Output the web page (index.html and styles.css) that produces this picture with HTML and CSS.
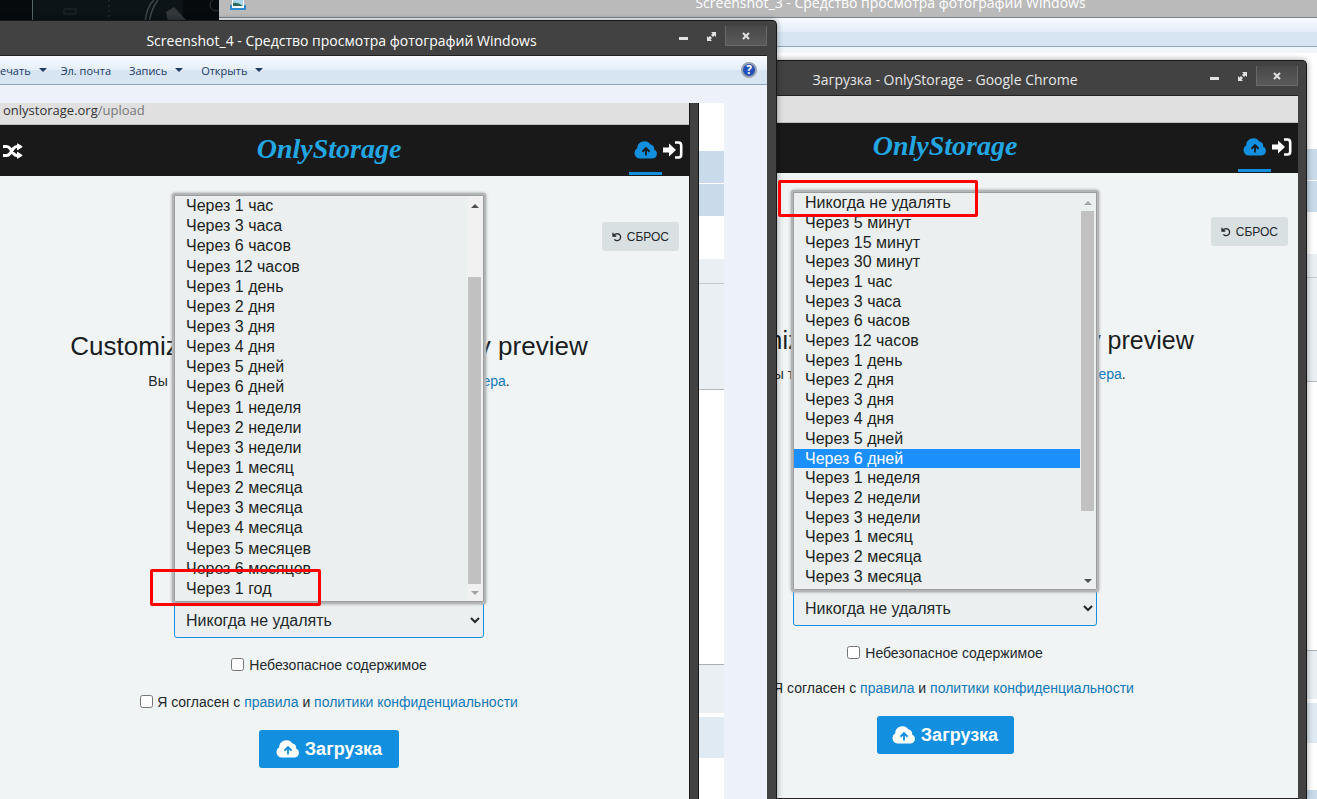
FILE: index.html
```html
<!DOCTYPE html>
<html lang="ru">
<head>
<meta charset="utf-8">
<title>OnlyStorage</title>
<link rel="stylesheet" href="styles.css">
</head>
<body>
<svg class="defs" aria-hidden="true">
  <symbol id="i-cloud" viewBox="0 0 24 18"><path fill="currentColor" fill-rule="evenodd" d="M6 17.500A5.500 5.500 0 0 1 3.200 7.300 7.200 7.200 0 0 1 16.500 3.600a3.800 3.800 0 0 1 3.500 4.900A4.700 4.700 0 0 1 18.800 17.500ZM12 5.800 7.800 10.100 9.100 11.400 11.100 9.400V14.500H12.900V9.400L14.900 11.400 16.200 10.100Z"/></symbol>
  <symbol id="i-login" viewBox="0 0 20 18"><path fill="currentColor" d="M0 6.500H6V2.500L13 9 6 15.500V11.500H0Z"/><path fill="none" stroke="currentColor" stroke-width="2.600" d="M12 1.500H15.500Q18.200 1.500 18.200 4.500V13.500Q18.200 16.500 15.500 16.500H12"/></symbol>
  <symbol id="i-shuffle" viewBox="0 0 20 16"><path fill="none" stroke="currentColor" stroke-width="3" d="M0 3.500H3.500Q5.500 3.500 7 5.500L10.500 10.500Q12 12.500 14 12.500H16M0 12.500H3.500Q5.500 12.500 7 10.500L10.500 5.500Q12 3.500 14 3.500H16"/><path fill="currentColor" stroke="currentColor" stroke-width="1" stroke-linejoin="round" d="M14.500.800 19.200 3.700 14.500 6.800ZM14.500 9.300 19.200 12.400 14.500 15.300Z"/></symbol>
  <symbol id="i-undo" viewBox="0 0 10 10"><path fill="none" stroke="currentColor" stroke-width="1.300" d="M1 .800V4H4.300M1.400 3.600Q3 1.700 5.300 1.700A3.500 3.500 0 1 1 2.400 7.400"/></symbol>
  <symbol id="i-max" viewBox="0 0 9 9"><path fill="currentColor" d="M4 0H9V5L7.500 3.500 6 5 4 3 5.500 1.500ZM0 4 1.500 5.500 3 4 5 6 3.500 7.500 5 9H0Z"/></symbol>
  <symbol id="i-close" viewBox="0 0 8 8"><path stroke="currentColor" stroke-width="2" d="M1 1 7 7M7 1 1 7"/></symbol>
</svg>

<main class="desktop">
  <svg class="wallpaper" viewBox="0 0 219 22" aria-hidden="true">
    <rect width="219" height="22" fill="#070a0c"/><rect x="33" width="150" height="22" fill="#0c1418"/>
    <path d="M32.500 0V22" stroke="#56646b"/><path d="M145 22Q147 6 154 0M149 22Q152 7 158 0" stroke="#3c484e" fill="none" stroke-width="1.500"/>
    <path d="M166 12 174 7 188 22H168Z" fill="#33373a"/><path d="M64 9H76V14H64Z" fill="none" stroke="#1e2a30"/><path d="M109 0V18" stroke="#25333a" stroke-dasharray="2 3"/>
    <circle cx="216" cy="5" r="6" fill="none" stroke="#30363a"/>
  </svg>

  <section class="window back-window" aria-label="Screenshot_3">
    <header class="back-title">
      <svg class="photo-icon" viewBox="0 0 16 10" aria-hidden="true"><path fill="#2e8bd0" d="M0 5H3V7H13V5H16V10H0Z"/><path fill="#fff" d="M2 0H14V8H2Z"/><path fill="#a9d5ee" d="M3 0H13V6H3Z"/><path fill="#2b6a57" d="M3 3Q8 2 13 6H3Z"/></svg>
      <span>Screenshot_3 - Средство просмотра фотографий Windows</span>
    </header>
    <div class="back-toolbar"></div>
    <div class="stripes">
      <i class="s-white s1"></i><i class="s-blue s2"></i><i class="s-blue s3"></i><i class="s-white s4"></i><i class="s-gray s5"></i><i class="s-gray s6"></i><i class="s-white s7"></i><i class="s-gray s8"></i><i class="s-pale s9"></i><i class="s-white s10"></i><i class="s-blue s11"></i>
    </div>
  </section>

  <section class="window chrome-window" aria-label="Загрузка">
    <header class="title-bar">
      <h2 class="title">Загрузка - OnlyStorage - Google Chrome</h2>
      <div class="controls">
        <button class="ctl" aria-label="Свернуть"><span class="dash"></span></button>
        <button class="ctl" aria-label="Развернуть"><svg><use href="#i-max"/></svg></button>
        <button class="ctl close" aria-label="Закрыть"><svg><use href="#i-close"/></svg></button>
      </div>
    </header>
    <div class="site compact">
      <div class="address"></div>
      <nav class="site-nav">
        <span></span>
        <a class="logo" href="#">OnlyStorage</a>
        <div class="nav-links">
          <a class="upload-tab" href="#" aria-label="Загрузка"><svg><use href="#i-cloud"/></svg></a>
          <a class="login" href="#" aria-label="Войти"><svg><use href="#i-login"/></svg></a>
        </div>
      </nav>
      <form class="page">
        <div class="actions"><button type="button" class="reset"><svg><use href="#i-undo"/></svg>СБРОС</button></div>
        <h1 class="heading">Customize upload by clicking on any preview</h1>
        <p class="hint">Вы также можете добавить фото с <a href="#">вашего компьютера</a>.</p>
        <div class="expiry">
          <select class="expiry-select" aria-label="Автоудаление"><option>Никогда не удалять</option></select>
          <div class="popup">
            <ul class="options" role="listbox" aria-label="Срок хранения">
              <li role="option">Никогда не удалять</li><li role="option">Через 5 минут</li><li role="option">Через 15 минут</li><li role="option">Через 30 минут</li><li role="option">Через 1 час</li><li role="option">Через 3 часа</li><li role="option">Через 6 часов</li><li role="option">Через 12 часов</li><li role="option">Через 1 день</li><li role="option">Через 2 дня</li><li role="option">Через 3 дня</li><li role="option">Через 4 дня</li><li role="option">Через 5 дней</li><li role="option" class="active" aria-selected="true">Через 6 дней</li><li role="option">Через 1 неделя</li><li role="option">Через 2 недели</li><li role="option">Через 3 недели</li><li role="option">Через 1 месяц</li><li role="option">Через 2 месяца</li><li role="option">Через 3 месяца</li>
            </ul>
            <div class="scroll"><span class="up off"></span><span class="track"><span class="thumb"></span></span><span class="down"></span></div>
          </div>
        </div>
        <label class="check nsfw"><input type="checkbox">Небезопасное содержимое</label>
        <label class="check agree"><input type="checkbox"><span>Я согласен с <a href="#">правила</a> и <a href="#">политики конфиденциальности</a></span></label>
        <button type="button" class="submit"><svg><use href="#i-cloud"/></svg>Загрузка</button>
      </form>
    </div>
  </section>

  <section class="window viewer-window" aria-label="Screenshot_4">
    <header class="title-bar">
      <h2 class="title">Screenshot_4 - Средство просмотра фотографий Windows</h2>
      <div class="controls">
        <button class="ctl" aria-label="Свернуть"><span class="dash"></span></button>
        <button class="ctl" aria-label="Развернуть"><svg><use href="#i-max"/></svg></button>
        <button class="ctl close" aria-label="Закрыть"><svg><use href="#i-close"/></svg></button>
      </div>
    </header>
    <div class="viewer">
      <div class="toolbar">
        <button class="tool">ечать<span class="caret"></span></button>
        <button class="tool">Эл. почта</button>
        <button class="tool">Запись<span class="caret"></span></button>
        <button class="tool">Открыть<span class="caret"></span></button>
        <button class="help" aria-label="Справка">?</button>
      </div>
      <div class="photo">
        <div class="site">
          <div class="address">onlystorage.org<span>/upload</span></div>
          <nav class="site-nav">
            <a class="shuffle" href="#" aria-label="Случайное"><svg><use href="#i-shuffle"/></svg></a>
            <a class="logo" href="#">OnlyStorage</a>
            <div class="nav-links">
              <a class="upload-tab" href="#" aria-label="Загрузка"><svg><use href="#i-cloud"/></svg></a>
              <a class="login" href="#" aria-label="Войти"><svg><use href="#i-login"/></svg></a>
            </div>
          </nav>
          <form class="page">
            <div class="actions"><button type="button" class="reset"><svg><use href="#i-undo"/></svg>СБРОС</button></div>
            <h1 class="heading">Customize upload by clicking on any preview</h1>
            <p class="hint">Вы также можете добавить фото с <a href="#">вашего компьютера</a>.</p>
            <div class="expiry">
              <select class="expiry-select" aria-label="Автоудаление"><option>Никогда не удалять</option></select>
              <div class="popup">
                <ul class="options" role="listbox" aria-label="Срок хранения">
                  <li role="option">Через 1 час</li><li role="option">Через 3 часа</li><li role="option">Через 6 часов</li><li role="option">Через 12 часов</li><li role="option">Через 1 день</li><li role="option">Через 2 дня</li><li role="option">Через 3 дня</li><li role="option">Через 4 дня</li><li role="option">Через 5 дней</li><li role="option">Через 6 дней</li><li role="option">Через 1 неделя</li><li role="option">Через 2 недели</li><li role="option">Через 3 недели</li><li role="option">Через 1 месяц</li><li role="option">Через 2 месяца</li><li role="option">Через 3 месяца</li><li role="option">Через 4 месяца</li><li role="option">Через 5 месяцев</li><li role="option">Через 6 месяцев</li><li role="option">Через 1 год</li>
                </ul>
                <div class="scroll at-end"><span class="up"></span><span class="track"><span class="thumb"></span></span><span class="down off"></span></div>
              </div>
            </div>
            <label class="check nsfw"><input type="checkbox">Небезопасное содержимое</label>
            <label class="check agree"><input type="checkbox"><span>Я согласен с <a href="#">правила</a> и <a href="#">политики конфиденциальности</a></span></label>
            <button type="button" class="submit"><svg><use href="#i-cloud"/></svg>Загрузка</button>
          </form>
        </div>
        <div class="inner-frame"></div>
        <div class="stripes inner">
          <i class="s-white s1"></i><i class="s-blue s2"></i><i class="s-blue s3"></i><i class="s-white s4"></i><i class="s-gray s5"></i><i class="s-gray s6"></i><i class="s-white s7"></i><i class="s-gray s8"></i><i class="s-pale s9"></i><i class="s-white s10"></i>
        </div>
      </div>
    </div>
  </section>

  <div class="mark mark-year"></div>
  <div class="mark mark-never"></div>
</main>
</body>
</html>
```
FILE: styles.css
```css
* { box-sizing: border-box; }
body { margin: 0; font-family: "Liberation Sans", Arial, sans-serif; font-size: 14px; color: #23282b; }
button, select, input { font: inherit; margin: 0; }
button { border: 0; padding: 0; background: none; color: inherit; }
a { color: #1378b8; text-decoration: none; }
.defs { position: absolute; width: 0; height: 0; }

.desktop { position: relative; height: 100vh; overflow: hidden; background: #070a0c; }
.wallpaper { display: block; width: 219px; height: 22px; }
.window { position: absolute; display: flex; flex-direction: column; }
.back-window { left: 219px; top: 0; right: 0; bottom: 0; background: #fff; }
.chrome-window { left: 583px; top: 60px; right: 10px; bottom: 0; }
.viewer-window { left: 0; top: 20px; width: 59%; bottom: 0; }

/* Window behind */
.back-title { height: 18px; flex: none; overflow: hidden; display: flex; justify-content: center; align-items: flex-start; background: #bababa; border-bottom: 1px solid #7b858d; color: #fff; font-family: "Open Sans", sans-serif; font-size: 14px; line-height: 20px; }
.back-title span { flex: 1; text-align: center; margin: -7px 0 0 245px; }
.photo-icon { position: absolute; left: 11px; top: 0; width: 16px; height: 10px; }
.back-toolbar { height: 35px; flex: none; background: linear-gradient(#f8fbff 0, #e4eef9 14px, #d7e5f3 14px, #d7e5f3 28px, #93a6c0 28px, #93a6c0 29px, #f1f4fb 29px); }
.stripes { flex: 1; display: flex; flex-direction: column; overflow: hidden; background: #fff; }
.stripes i { flex: none; }
.s-white { background: #fff; } .s-blue { background: #c9daea; } .s-gray { background: #eaeff3; } .s-pale { background: #e0eaf2; }
.s1 { height: 96px; } .s2 { height: 31px; } .s3 { height: 31px; margin-top: 1px; } .s4 { height: 42px; } .s5 { height: 24px; border-bottom: 1px solid #c5c9cd; }
.s6 { height: 104px; border-bottom: 1px solid #b4b8bd; } .s7 { height: 268px; } .s8 { height: 49px; border-top: 1px solid #aab0b9; } .s9 { height: 40px; margin-top: 4px; } .s10 { height: 47px; } .s11 { height: 20px; }

/* Framed windows */
.chrome-window, .viewer-window { background: #424242; border: 1px solid #181818; border-bottom: 0; border-radius: 5px 5px 0 0; box-shadow: 0 0 6px rgba(0, 0, 0, .4); }
.viewer-window { border-left: 0; border-top-left-radius: 0; padding-right: 9px; }
.chrome-window { padding: 0 8px; }
.title-bar { display: flex; align-items: flex-start; height: 35px; flex: none; border-bottom: 1px solid #222; }
.title { flex: 1; margin: 9px 0 0; padding-left: 14px; text-align: center; font: 14px/22px "Open Sans", sans-serif; color: #fff; white-space: nowrap; }
.chrome-window .title { margin-top: 8px; color: #e6e6e6; padding-left: 98px; }
.controls { display: flex; color: #e2e2e2; flex: none; }
.ctl { width: 28px; height: 20px; margin-top: 5px; display: grid; place-items: center; }
.ctl svg { width: 9px; height: 9px; }
.ctl.close { width: 42px; border: 1px solid #696969; border-top: 0; background: linear-gradient(#484848, #5a5a5a); }
.ctl.close svg { width: 8px; height: 8px; }
.dash { width: 9px; height: 3px; margin-top: 4px; background: #e2e2e2; }
.viewer { flex: 1; min-height: 0; display: flex; flex-direction: column; background: #edf2fa; }
.toolbar { display: flex; align-items: center; height: 29px; flex: none; border-bottom: 1px solid #93a6c0; background: linear-gradient(#f8fbff 0, #e4eef9 14px, #d7e5f3 14px); font-family: "Open Sans", sans-serif; font-size: 11px; color: #203a63; gap: 14px; padding-right: 10px; }
.tool { display: flex; align-items: center; gap: 8px; white-space: nowrap; margin-right: 4px; }
.tool:first-child { margin-right: 0; }
.caret { border: 4px solid transparent; border-top-color: #203a63; border-bottom: 0; }
.help { margin-left: auto; width: 16px; height: 16px; border-radius: 50%; border: 2px solid #9aa3b2; background: #2350b8; color: #fff; font-weight: bold; font-size: 12px; line-height: 12px; }
.photo { flex: 1; min-height: 0; margin: 18px 43px 0 0; display: flex; overflow: hidden; }
.inner-frame { flex: none; width: 10px; background: #424242; border: solid #181818; border-width: 0 1px; }
.stripes.inner { flex: none; width: 25px; }
.inner .s1 { height: 48px; } .inner .s2 { height: 32px; } .inner .s3 { height: 32px; } .inner .s4 { height: 43px; } .inner .s5 { height: 25px; } .inner .s6 { height: 106px; } .inner .s7 { height: 274px; } .inner .s8 { height: 49px; } .inner .s9 { height: 41px; }

/* Site */
.site { --top: 46px; --head: 79px; --hint: 9px; --menu: 211px; --agree: 17px; --select: 310px; --popup: 411px; flex: 1; min-width: 0; min-height: 0; display: flex; flex-direction: column; margin-left: -31px; background: #f0f4f5; overflow: hidden; }
.site.compact { --top: 44px; --head: 78px; --hint: 8px; --menu: 206px; --agree: 15px; --select: 304px; --popup: 402px; margin-left: 0; border-bottom: 1px solid #222; }
.address { height: 22px; flex: none; padding-left: 34px; background: #e0e0e0; border-bottom: 1px solid #bdbdbd; font: 13px/14px "Open Sans", sans-serif; color: #333; }
.address span { color: #777; }
.compact .address { height: 27px; }
.site-nav { display: grid; grid-template-columns: 1fr auto 1fr; height: 51px; flex: none; background: #191919; align-items: center; }
.compact .site-nav { height: 50px; }
.shuffle { padding-left: 34px; color: #fff; }
.shuffle svg { display: block; width: 20px; height: 16px; }
.logo { padding-bottom: 4px; font: italic bold 28px/40px "Liberation Serif", serif; color: #22a7e3; }
.nav-links { display: flex; justify-content: flex-end; align-self: stretch; padding-right: 6px; }
.upload-tab { width: 33px; color: #128fde; border-bottom: 3px solid #128fde; margin-bottom: 1px; display: grid; place-items: center; padding-top: 2px; }
.upload-tab svg { width: 24px; height: 18px; }
.login { color: #fff; display: grid; place-items: center; margin-left: 1px; padding-bottom: 2px; }
.login svg { width: 20px; height: 18px; }

.page { flex: 1; display: flex; flex-direction: column; align-items: center; }
.actions { align-self: stretch; display: flex; justify-content: flex-end; padding: var(--top) 10px 0; }
.reset { height: 29px; padding: 0 10px; border-radius: 3px; background: #d9e0e2; font-size: 12px; display: flex; align-items: center; gap: 5px; }
.reset svg { width: 10px; height: 10px; }
.heading { margin: var(--head) 0 0; font-size: 26px; line-height: 32px; font-weight: normal; white-space: nowrap; color: #191d1f; }
.compact .heading { font-size: 25px; }
.hint { margin: var(--hint) 0 0; line-height: 20px; white-space: nowrap; }
.expiry { position: relative; width: var(--select); margin-top: var(--menu); }
.expiry-select { display: block; width: 100%; height: 36px; padding: 0 0 0 7px; border: 1px solid #128fde; border-radius: 3px; background: #ebeff0; font-size: 16px; color: #23282b; }
.popup { position: absolute; left: -2px; right: -2px; bottom: 34px; height: var(--popup); display: flex; border: 2px solid #b3b5b6; border-top-width: 3px; border-radius: 3px; background: #ebeff0; outline: 1px solid #9a9c9d; outline-offset: -3px; box-shadow: 0 0 3px #999; }
.options { flex: 1; margin: 0; padding: 0 0 3px 1px; list-style: none; display: grid; grid-auto-rows: 1fr; align-items: center; font-size: 16px; line-height: 20px; color: #1b1f21; }
.compact .options { line-height: 19px; padding-bottom: 4px; }
.options li { padding-left: 11px; }
.options .active { background: #1b8ffc; color: #fff; }
.scroll { width: 17px; padding: 1px 3px 1px 1px; display: flex; flex-direction: column; background: #f1f1f1; }
.compact .scroll { background: #ebeff0; }
.up, .down { height: 17px; flex: none; display: grid; place-items: center; }
.up::before, .down::before { content: ""; border: 4px solid transparent; border-top: 0; border-bottom-color: #505050; }
.down::before { border-top: 4px solid #505050; border-bottom: 0; }
.up.off::before { border-bottom-color: #a3a3a3; }
.down.off::before { border-top-color: #a3a3a3; }
.track { flex: 1; display: flex; flex-direction: column; }
.thumb { height: 83%; background: #c1c1c1; }
.at-end .track { justify-content: flex-end; }
.check { display: flex; align-items: center; line-height: 20px; gap: 5px; margin-top: 17px; white-space: nowrap; }
.check input { width: 13px; height: 13px; margin-bottom: 2px; }
.agree { margin-top: var(--agree); gap: 4px; }
.submit { margin-top: 18px; width: 140px; height: 38px; border-radius: 3px; background: #128fde; color: #fff; font-size: 18px; font-weight: bold; display: flex; align-items: center; justify-content: center; gap: 5px; }
.compact .submit { width: 137px; }
.submit svg { width: 24px; height: 18px; }

.mark { position: absolute; border: 3px solid #f00; border-radius: 2px; }
.mark-year { left: 150px; top: 569px; width: 171px; height: 37px; }
.mark-never { left: 778px; top: 180px; width: 200px; height: 37px; }
```
